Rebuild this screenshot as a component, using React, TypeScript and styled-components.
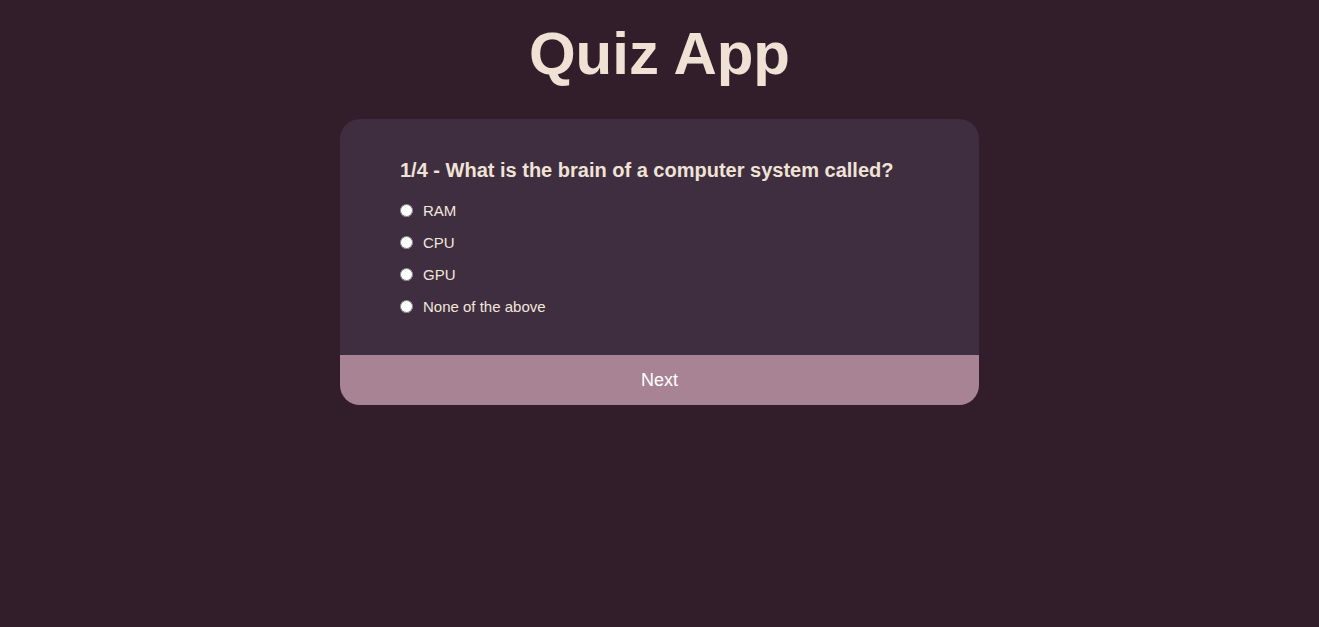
import React from "react";
import styled, { createGlobalStyle } from "styled-components";

const Global = createGlobalStyle`
  html, body { margin: 0; padding: 0; background: #321d2b; }
  body { font-family: "Liberation Sans", Arial, sans-serif; min-height: 627px; }
`;

const Page = styled.main`
  display: flex;
  flex-direction: column;
  align-items: center;
  padding-top: 19px;
`;

const Title = styled.h1`
  margin: 0 0 31px;
  font-size: 60px;
  font-weight: 700;
  line-height: 69px;
  color: #efe2d5;
`;

const Card = styled.section`
  width: 639px;
  background: #3e2e40;
  border-radius: 20px;
  overflow: hidden;
`;

const Body = styled.div`
  padding: 40px 60px 40px;
`;

const Question = styled.h2`
  margin: 0 0 20px;
  font-size: 20px;
  line-height: 23px;
  font-weight: 700;
  color: #f0e3d6;
`;

const Options = styled.ul`
  list-style: none;
  margin: 0;
  padding: 0;
  display: flex;
  flex-direction: column;
  gap: 15px;
`;

const Option = styled.li`
  display: flex;
  align-items: center;
  gap: 10px;
  font-size: 15px;
  line-height: 17px;
  color: #f3e6da;
`;

const Radio = styled.input`
  margin: 0;
  width: 13px;
  height: 13px;
`;

const NextButton = styled.button`
  display: block;
  width: 100%;
  height: 50px;
  border: none;
  background: #a78393;
  color: #ffffff;
  font-family: "Liberation Sans", Arial, sans-serif;
  font-size: 18px;
  cursor: pointer;
`;

const options = ["RAM", "CPU", "GPU", "None of the above"];

export default function App() {
  return (
    <>
      <Global />
      <Page>
        <Title>Quiz App</Title>
        <Card>
          <Body>
            <Question>1/4 - What is the brain of a computer system called?</Question>
            <Options>
              {options.map((o, i) => (
                <Option key={o}>
                  <Radio type="radio" name="answer" id={`a${i}`} />
                  <label htmlFor={`a${i}`}>{o}</label>
                </Option>
              ))}
            </Options>
          </Body>
          <NextButton>Next</NextButton>
        </Card>
      </Page>
    </>
  );
}
